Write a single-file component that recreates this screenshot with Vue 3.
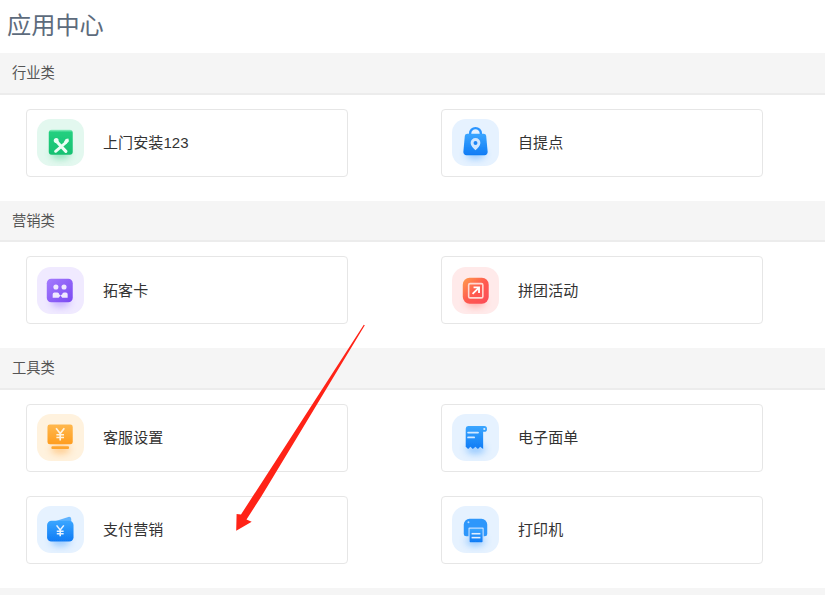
<script setup>
const sections = [
  { name: '行业类', apps: [{ label: '上门安装123', icon: 'install', bg: '#e3f8ef', glow: '#3fd08c' }, { label: '自提点', icon: 'bag', bg: '#e6f2ff', glow: '#4aa3ff' }] },
  { name: '营销类', apps: [{ label: '拓客卡', icon: 'card', bg: '#f0eaff', glow: '#a27bff' }, { label: '拼团活动', icon: 'group', bg: '#ffeaea', glow: '#ff7a70' }] },
  { name: '工具类', apps: [
    { label: '客服设置', icon: 'monitor', bg: '#fff2de', glow: '#ffaa44' }, { label: '电子面单', icon: 'receipt', bg: '#e6f2ff', glow: '#4aa3ff' },
    { label: '支付营销', icon: 'wallet', bg: '#e6f2ff', glow: '#4aa3ff' }, { label: '打印机', icon: 'printer', bg: '#e6f2ff', glow: '#4aa3ff' }
  ] }
]
</script>

<template>
  <div class="page">
    <h1 class="title">应用中心</h1>
    <section v-for="s in sections" :key="s.name" class="section">
      <h2 class="head">{{ s.name }}</h2>
      <div class="grid">
        <div v-for="a in s.apps" :key="a.label" class="card">
          <div class="tile" :style="{ background: a.bg }">
            <svg class="ico" viewBox="0 0 48 48" width="47" height="47">
              <defs>
                <filter id="b" x="-80%" y="-80%" width="260%" height="260%"><feGaussianBlur stdDeviation="4" /></filter>
                <filter id="s" x="-10%" y="-10%" width="120%" height="120%"><feGaussianBlur stdDeviation=".3" /></filter>
                <linearGradient id="gGreen" x1="0" y1="0" x2="0" y2="1"><stop offset="0" stop-color="#8ef0c2" /><stop offset=".1" stop-color="#22cf7f" /><stop offset="1" stop-color="#17c172" /></linearGradient>
                <linearGradient id="gBlue" x1="0" y1="0" x2="0" y2="1"><stop offset="0" stop-color="#3ba6ff" /><stop offset="1" stop-color="#0f7bf5" /></linearGradient>
                <linearGradient id="gPurple" x1="0" y1="0" x2="1" y2="1"><stop offset="0" stop-color="#a47bfd" /><stop offset="1" stop-color="#7a49f2" /></linearGradient>
                <linearGradient id="gRed" x1="0" y1="0" x2="1" y2="1"><stop offset="0" stop-color="#ff9d4d" /><stop offset=".5" stop-color="#ff5b4f" /><stop offset="1" stop-color="#fb4a57" /></linearGradient>
                <linearGradient id="gOrange" x1="0" y1="0" x2="0" y2="1"><stop offset="0" stop-color="#ffb84d" /><stop offset="1" stop-color="#ff9d1f" /></linearGradient>
              </defs>
              <ellipse cx="24" cy="36" rx="10" ry="5" :fill="a.glow" opacity=".5" filter="url(#b)" />

              <g v-if="a.icon === 'install'" filter="url(#s)">
                <rect x="12" y="11" width="24.500" height="25.500" rx="3" fill="url(#gGreen)" />
                <path d="M19.500 22.500l10 10.500" stroke="#eafff5" stroke-width="3.200" stroke-linecap="round" fill="none" />
                <path d="M29.500 24l-10.500 9" stroke="#eafff5" stroke-width="3" stroke-linecap="round" fill="none" />
                <path d="M17.500 20.500a3 3 0 0 1 4.300 0l.500 3.500-3.500.500a3 3 0 0 1-1.300-4z" fill="#eafff5" />
                <path d="M27.500 23.500l1.800-3 2.800-.500.500 2.800-2.500 2.500z" fill="#eafff5" />
              </g>

              <g v-else-if="a.icon === 'bag'" filter="url(#s)">
                <path d="M18.500 17v-2.200a5.500 5.500 0 0 1 11 0V17" fill="none" stroke="#2b95ff" stroke-width="2.400" />
                <path d="M15.600 15h16.800a2.500 2.500 0 0 1 2.500 2.200l1.500 16.300A3.200 3.200 0 0 1 33.200 37H14.800a3.200 3.200 0 0 1-3.200-3.500l1.500-16.300A2.500 2.500 0 0 1 15.600 15z" fill="url(#gBlue)" />
                <path d="M24 19.500a5 5 0 0 1 5 5c0 3-3 5.500-5 7.500-2-2-5-4.500-5-7.500a5 5 0 0 1 5-5z" fill="#cfe6ff" />
                <circle cx="24" cy="24.500" r="2" fill="#1c84f5" />
              </g>

              <g v-else-if="a.icon === 'card'" filter="url(#s)">
                <rect x="10" y="12" width="26.500" height="24" rx="4.500" fill="url(#gPurple)" />
                <circle cx="19.300" cy="20.500" r="2.600" fill="#efe8ff" />
                <circle cx="27.600" cy="20.500" r="2.600" fill="#efe8ff" />
                <path d="M16 31.500v-3.700a1.800 1.800 0 0 1 1.800-1.800h3a1.800 1.800 0 0 1 1.800 1.800L24 29l-1.900 2.500zM24 29l1.800-1.200A1.800 1.800 0 0 1 27.600 26h1.900a1.800 1.800 0 0 1 1.800 1.800v3.700h-5.500z" fill="#efe8ff" />
              </g>

              <g v-else-if="a.icon === 'group'" filter="url(#s)">
                <rect x="11" y="11" width="26.500" height="26.500" rx="7" fill="url(#gRed)" />
                <rect x="17" y="17" width="14.500" height="14.500" rx="1.500" fill="none" stroke="#ffd9d2" stroke-width="1.600" />
                <path d="M21 27.500l6-6M22 20.800h5.600V26.500" fill="none" stroke="#fff" stroke-width="1.900" />
              </g>

              <g v-else-if="a.icon === 'monitor'" filter="url(#s)">
                <rect x="10.700" y="10.700" width="25.800" height="20.300" rx="2.500" fill="url(#gOrange)" />
                <rect x="14.700" y="33" width="18" height="2.700" rx="1" fill="#ffa52e" />
                <path d="M19.500 14.500l4.200 5.500 4.200-5.500M23.700 20v7M19.800 21.200h7.800M19.800 24h7.800" fill="none" stroke="#fff3df" stroke-width="1.700" />
              </g>

              <g v-else-if="a.icon === 'receipt'" filter="url(#s)">
                <path d="M14.500 12.300H33a2.700 2.700 0 0 1 2.700 2.700v.500a2.700 2.700 0 0 1-2.700 2.700h-1.200V35.700l-3-2.200-2.300 2.200-2.600-2.200-2.600 2.200-2.500-2.200-2.300 2.200-2.500-2.200V15a2.700 2.700 0 0 1 2.500-2.700z" fill="url(#gBlue)" />
                <circle cx="33" cy="15.300" r="1.100" fill="#dcedff" />
                <rect x="15.500" y="18" width="12" height="1.800" rx=".9" fill="#d5e9ff" />
                <rect x="15.500" y="23" width="8" height="1.800" rx=".9" fill="#d5e9ff" />
              </g>

              <g v-else-if="a.icon === 'wallet'" filter="url(#s)">
                <path d="M12 17.500l20-6.300a2.500 2.500 0 0 1 3 2.200V20H12z" fill="#5fb3ff" />
                <rect x="10.300" y="15" width="27" height="21.300" rx="4.500" fill="url(#gBlue)" />
                <path d="M20 19.800l3.700 4.700 3.700-4.700M23.700 24.500v6.500M20.200 25.800h7M20.200 28.300h7" fill="none" stroke="#e6f2ff" stroke-width="1.600" />
              </g>

              <g v-else filter="url(#s)">
                <path d="M18 13h12a6 6 0 0 1 6 6v9.500a2.500 2.500 0 0 1-2.500 2.500h-19a2.500 2.500 0 0 1-2.500-2.500V19a6 6 0 0 1 6-6z" fill="#2e97fb" />
                <circle cx="16.800" cy="16.500" r="1" fill="#bedcff" />
                <rect x="16.800" y="22" width="15.600" height="15" rx="1" fill="#bfdcff" />
                <rect x="18" y="23.200" width="13.200" height="13.800" rx=".8" fill="url(#gBlue)" />
                <rect x="20" y="27.500" width="9" height="1.600" fill="#e3f0ff" />
                <rect x="20" y="31.500" width="9" height="1.600" fill="#e3f0ff" />
              </g>
            </svg>
          </div>
          <span class="label">{{ a.label }}</span>
        </div>
      </div>
    </section>
    <div class="foot"></div>
    <svg class="arrow" viewBox="0 0 825 595" width="825" height="595">
      <polygon points="364.800,325.200 295.500,440 261,497 246.500,519.500 251.700,521.700 236.200,530.800 236.600,514 241,514.500 363.800,324.800" fill="#ff2317" />
    </svg>
  </div>
</template>

<style scoped>
.page {
  position: relative;
  width: 825px;
  height: 595px;
  overflow: hidden;
  background: #fff;
  font-family: "Liberation Sans", "Noto Sans CJK SC", sans-serif;
}
.title {
  margin: 0;
  height: 53px;
  padding-left: 7px;
  font-size: 24.2px;
  font-weight: 400;
  line-height: 52px;
  color: #5d6b7c;
}
.section {
  height: 147.6px;
}
.section:last-of-type {
  height: auto;
}
.head {
  margin: 0;
  box-sizing: border-box;
  height: 41.6px;
  padding-left: 12px;
  font-size: 14.3px;
  font-weight: 400;
  line-height: 40px;
  color: #555;
  background: #f5f5f5;
  border-bottom: 2px solid #ececec;
}
.grid {
  display: grid;
  grid-template-columns: 322px 322px;
  column-gap: 93px;
  row-gap: 24px;
  padding: 14px 0 24px 26px;
}
.card {
  box-sizing: border-box;
  height: 68px;
  display: flex;
  align-items: center;
  padding-left: 10px;
  border: 1px solid #e6e6e6;
  border-radius: 4px;
  background: #fff;
}
.tile {
  flex: none;
  width: 47px;
  height: 47px;
  border-radius: 14px;
  overflow: hidden;
}
.ico {
  display: block;
}
.label {
  margin-left: 19px;
  margin-bottom: 2px;
  font-size: 15px;
  letter-spacing: .1px;
  color: #333;
}
.foot {
  height: 10px;
  background: #f5f5f5;
}
.arrow {
  position: absolute;
  left: 0;
  top: 0;
  pointer-events: none;
}
</style>
